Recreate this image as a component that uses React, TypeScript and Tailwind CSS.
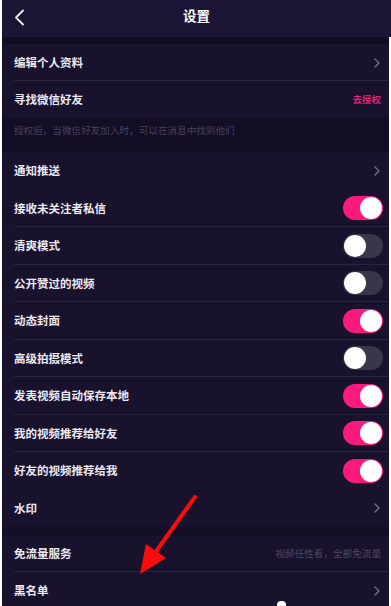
import React from "react";

type Item =
  | { kind: "link"; label: string; line?: boolean; right?: string; rightClass?: string }
  | { kind: "toggle"; label: string; on: boolean; line?: boolean };

const toggles: Item[] = [
  { kind: "toggle", label: "接收未关注者私信", on: true, line: true },
  { kind: "toggle", label: "清爽模式", on: false, line: true },
  { kind: "toggle", label: "公开赞过的视频", on: false, line: true },
  { kind: "toggle", label: "动态封面", on: true, line: true },
  { kind: "toggle", label: "高级拍摄模式", on: false, line: true },
  { kind: "toggle", label: "发表视频自动保存本地", on: true, line: true },
  { kind: "toggle", label: "我的视频推荐给好友", on: true, line: true },
  { kind: "toggle", label: "好友的视频推荐给我", on: true },
];

function Chevron() {
  return (
    <svg width="6" height="10" viewBox="0 0 6 10" className="mr-[1px]">
      <path d="M1 1l4 4-4 4" fill="none" stroke="#77728a" strokeWidth="1.3" strokeLinecap="round" strokeLinejoin="round" />
    </svg>
  );
}

function Toggle({ on }: { on: boolean }) {
  return (
    <div
      className={
        "flex h-[24px] w-[40px] items-center rounded-full px-[1px] " +
        (on ? "justify-end bg-[#fc1b7c]" : "justify-start bg-[#3a3549]")
      }
    >
      <div className="h-[22px] w-[22px] rounded-full bg-white" />
    </div>
  );
}

function Row({ item, h = "h-[37.5px]" }: { item: Item; h?: string }) {
  return (
    <div className={"relative flex items-center justify-between pl-[12px] " + h + (item.kind === "toggle" ? " pr-[6px]" : " pr-[8px]")}>
      <span className="text-[11.5px] font-semibold text-[#ebe8f2]">{item.label}</span>
      {item.kind === "toggle" ? (
        <Toggle on={item.on} />
      ) : item.right ? (
        <span className={item.rightClass}>{item.right}</span>
      ) : (
        <Chevron />
      )}
      {item.line && <div className="absolute bottom-0 left-[12px] right-0 h-px bg-[#2a2440]" />}
    </div>
  );
}

export default function App() {
  return (
    <div
      className="relative h-[606px] w-[391px] overflow-hidden border-l-2 border-white bg-[#19122d]"
      style={{ fontFamily: '"Noto Sans CJK SC", "Noto Sans", sans-serif' }}
    >
      <div className="relative flex h-[37px] items-start justify-center bg-[#1c1434] pt-[5px]">
        <svg width="11" height="17" viewBox="0 0 11 17" className="absolute left-[12px] top-[9px]">
          <path d="M9 1.5L2 8.5l7 7" fill="none" stroke="#f2f0f7" strokeWidth="1.8" strokeLinecap="round" strokeLinejoin="round" />
        </svg>
        <span className="text-[13.5px] font-semibold leading-[20px] text-white">设置</span>
      </div>

      <div className="border-r-2 border-white">
        <div className="h-[7px] bg-[#130d22]" />
        <Row item={{ kind: "link", label: "编辑个人资料", line: true }} h="h-[37px]" />
        <Row
          item={{ kind: "link", label: "寻找微信好友", right: "去授权", rightClass: "text-[9.5px] font-semibold text-[#dc2478]" }}
          h="h-[37px]"
        />
        <div className="h-[34px] bg-[#140e24] pl-[12px] pt-[5px] text-[9.6px] text-[#47415c]">
          授权后，当微信好友加入时，可以在消息中找到他们
        </div>
        <Row item={{ kind: "link", label: "通知推送" }} />
        {toggles.map((t) => (
          <Row key={t.label} item={t} />
        ))}
        <Row item={{ kind: "link", label: "水印" }} />
        <div className="h-[8px] bg-[#140e24]" />
        <Row
          item={{
            kind: "link",
            label: "免流量服务",
            line: true,
            right: "视频任性看，全部免流量",
            rightClass: "text-[9.6px] text-[#4d4763]",
          }}
          h="h-[37px]"
        />
        <Row item={{ kind: "link", label: "黑名单" }} h="h-[37px]" />
      </div>

      <svg className="pointer-events-none absolute left-0 top-0" width="391" height="606" viewBox="0 0 391 606">
        <line x1="193" y1="497" x2="155" y2="550" stroke="#f80c0c" strokeWidth="4" strokeLinecap="round" />
        <polygon points="144,544 164,558 138,574" fill="#f80c0c" />
      </svg>
      <div className="absolute left-[275px] top-[601px] h-[8px] w-[9px] rounded-full bg-white" />
    </div>
  );
}
